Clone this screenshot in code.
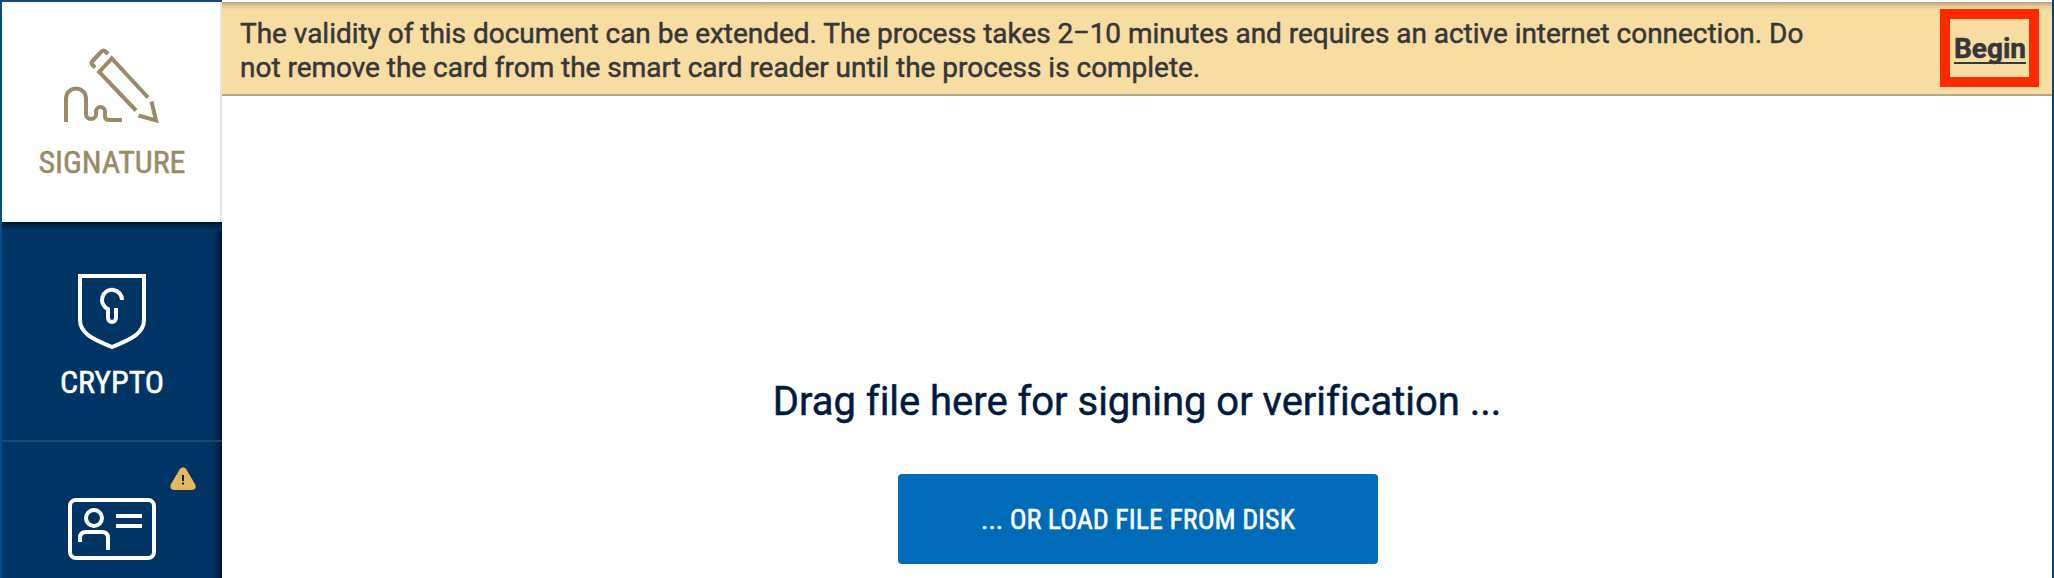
<div class="window">
  <nav class="sidebar">
    <div class="tile active">
      <svg class="sign" width="96" height="76" viewBox="0 0 96 76" fill="none" stroke="currentColor" stroke-width="4">
        <path d="M2 74V50.500a10 10 0 0 1 20 0V66a5 5 0 0 0 10 0V63.500a4.500 4.500 0 0 1 9 0V68q0 4 4 4H58" />
        <path d="M72 62.500L35.200 24 47.800 10.500 84 49.500" />
        <path d="M31 19.500L28.500 17q-2-2 0-4L37.500 3.500q2-2 4 0L44 6" />
        <path d="M74.500 67.500L92 72.500 87.500 53.500" />
      </svg>
      <span class="label">SIGNATURE</span>
    </div>
    <div class="tile crypto">
      <svg class="shield" width="68" height="76" viewBox="0 0 68 76" fill="none" stroke="currentColor" stroke-width="4">
        <path d="M2 2H66V46C66 59 54 65 34 73C14 65 2 59 2 46Z" />
        <path d="M44 26a10 10 0 1 0-14 9V44a4 4 0 0 0 8 0V34" />
      </svg>
      <span class="label">CRYPTO</span>
    </div>
    <div class="tile card">
      <svg class="id" width="88" height="62" viewBox="0 0 88 62" fill="none" stroke="currentColor" stroke-width="4">
        <rect x="2" y="2" width="84" height="58" rx="6" />
        <circle cx="26" cy="20" r="8" />
        <path d="M12 44V40q0-6 6-6H34q6 0 6 6V52M48 18H74M48 28H74" />
      </svg>
      <svg class="warn" width="26" height="23" viewBox="0 0 26 23">
        <path d="M10 1.800Q13-1.400 16 1.800L25.200 17.500Q27 22.500 22 23H4Q-1 22.500 .8 17.500Z" fill="#e3b959" />
        <path d="M12 8h2v6h-2zM12 15.500h2v2h-2z" fill="#001b3f" />
      </svg>
    </div>
  </nav>
  <main>
    <div class="banner">
      <p>The validity of this document can be extended. The process takes 2<span class="dash">–</span>10 minutes and requires an active internet connection. Do not remove the card from the smart card reader until the process is complete.</p>
      <div class="mark"><a href="#begin">Begin</a></div>
    </div>
    <section>
      <h1>Drag file here for signing or verification ...</h1>
      <button>... OR LOAD FILE FROM DISK</button>
    </section>
  </main>
</div>

<style>
  :global(body) { margin: 0; overflow: hidden; }
  .window {
    box-sizing: border-box; width: 2054px; height: 578px; display: flex; overflow: hidden;
    border-left: 2px solid #00508c; border-right: 2px solid #00467f; background: #fff;
    font-family: Roboto, sans-serif; font-variant-ligatures: none;
    -webkit-text-stroke: 0.5px currentColor;
  }
  .sidebar {
    box-sizing: border-box; width: 220px; flex: none; border-top: 2px solid #1a4876;
    background: linear-gradient(to left, #001022 0, #00224a 3px, #003058 7px, #003465 10px);
  }
  .tile {
    box-sizing: border-box; height: 220px; position: relative; display: flex; flex-direction: column;
    align-items: center; color: #fff;
  }
  .active { background: #fff; color: #998b66; border-right: 2px solid #e5e5e5; }
  .crypto {
    background: linear-gradient(#001327 0, #002347 3px, #003262 8px, transparent 10px);
    border-bottom: 2px solid #1a4876;
  }
  .label {
    font-family: "Roboto Condensed", Roboto, sans-serif; font-stretch: 75%;
    font-size: 32px; line-height: 38px; letter-spacing: -0.08px; white-space: nowrap;
  }
  .active .label { margin-left: 2px; }
  .sign { margin: 46px 0 19px 2px; flex: none; }
  .shield { margin: 52px 0 13px; flex: none; }
  .id { margin-top: 56px; flex: none; }
  .warn { position: absolute; left: 168px; top: 25px; }
  main { flex: 1; display: flex; flex-direction: column; padding-top: 2px; }
  .banner {
    box-sizing: border-box; height: 94px; display: flex; align-items: flex-start; justify-content: space-between;
    background: linear-gradient(#b5a17a 0, #d8c08d 3px, #f0d59b 6px, #f8dda3 9px);
    border-bottom: 2px solid #b4a484; padding: 0 13px 0 18px;
  }
  p { margin: 15px 0 0; width: 1600px; font-size: 28px; line-height: 34px; letter-spacing: -0.027px; color: #363739; }
  .dash { font-size: 25px; line-height: 0; position: relative; top: -2px; }
  .mark {
    box-sizing: border-box; width: 99px; height: 78px; margin-top: 7px; border: 10px solid #ff2a00;
    padding-top: 13px; display: flex; justify-content: center; align-items: flex-start;
  }
  a {
    font-size: 28px; font-weight: 700; line-height: 33px; color: #363739; text-decoration: none;
    border-bottom: 2px solid #363739; height: 30px; margin-left: 1px;
  }
  section { display: flex; flex-direction: column; align-items: center; padding: 282px 0 0 2px; }
  h1 { margin: 0 2px 49px 0; font-size: 40px; line-height: 47px; font-weight: 400; letter-spacing: -0.035px; color: #001b3f; }
  button {
    width: 480px; height: 90px; border: 0; border-radius: 4px; background: #006bb8; color: #fff; padding: 0;
    font-family: "Roboto Condensed", Roboto, sans-serif; font-stretch: 75%; font-size: 28px; line-height: 33px;
    -webkit-text-stroke: 0.5px currentColor;
  }
</style>
